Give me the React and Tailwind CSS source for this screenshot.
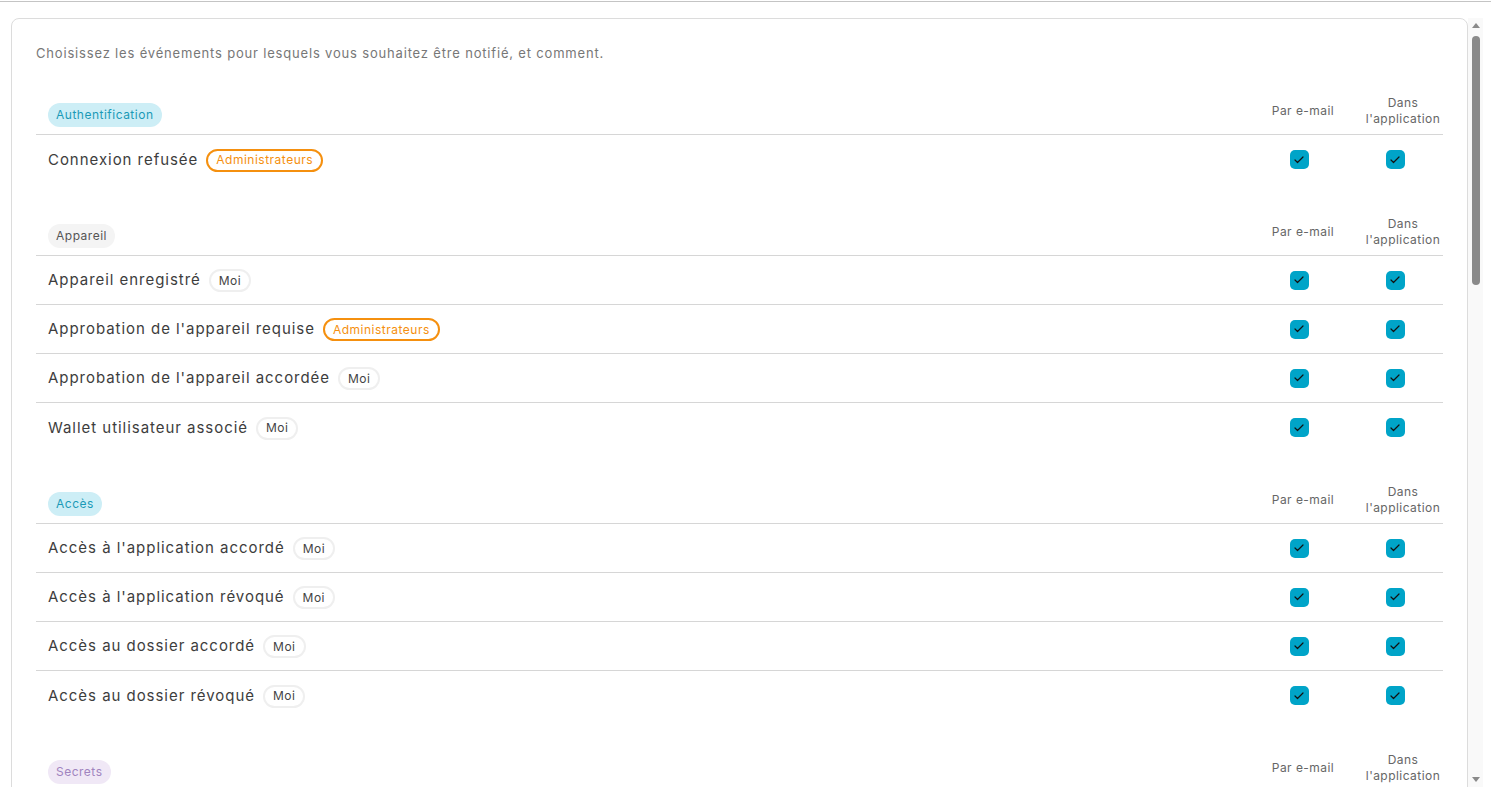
import { Check } from 'lucide-react'

const SECTIONS = [
  {
    label: 'Authentification',
    tone: 'cyan',
    events: [{ name: 'Connexion refusée', audience: 'admin' }],
  },
  {
    label: 'Appareil',
    tone: 'gray',
    events: [
      { name: 'Appareil enregistré', audience: 'me' },
      { name: "Approbation de l'appareil requise", audience: 'admin' },
      { name: "Approbation de l'appareil accordée", audience: 'me' },
      { name: 'Wallet utilisateur associé', audience: 'me' },
    ],
  },
  {
    label: 'Accès',
    tone: 'cyan',
    events: [
      { name: "Accès à l'application accordé", audience: 'me' },
      { name: "Accès à l'application révoqué", audience: 'me' },
      { name: 'Accès au dossier accordé', audience: 'me' },
      { name: 'Accès au dossier révoqué', audience: 'me' },
    ],
  },
  {
    label: 'Secrets',
    tone: 'purple',
    events: [
      { name: 'Secret partagé', audience: 'me' },
      { name: 'Secret modifié', audience: 'me' },
    ],
  },
]

const TONES = {
  cyan: 'bg-[#cdeef6] text-[#1b9ab7]',
  gray: 'bg-[#f4f4f4] text-[#555]',
  purple: 'bg-[#f0e8f6] text-[#a084bf]',
}

function CategoryChip({ label, tone }) {
  return (
    <span className={`inline-flex h-6 items-center rounded-full px-2 text-xs tracking-[0.5px] ${TONES[tone]}`}>
      {label}
    </span>
  )
}

function AudienceTag({ audience }) {
  if (audience === 'admin') {
    return (
      <span className="inline-flex h-[23px] items-center rounded-full border-2 border-[#f5900f] px-2 text-xs tracking-[0.5px] text-[#f5900f]">
        Administrateurs
      </span>
    )
  }
  return (
    <span className="inline-flex h-[23px] items-center rounded-full border-2 border-[#efefef] px-2 text-xs tracking-[0.5px] text-[#444]">
      Moi
    </span>
  )
}

function Checkbox() {
  return (
    <span className="grid h-[19px] w-[19px] place-items-center rounded-[5px] bg-[#00a4c8] text-[#111]">
      <Check size={12} strokeWidth={2.4} />
    </span>
  )
}

function Section({ section, first }) {
  return (
    <div className={first ? 'mt-[25px]' : 'mt-6'}>
      <div className="grid h-12 grid-cols-[1fr_96px_92px] items-center border-b border-[#d6d6d6] py-2 text-xs leading-4 tracking-[0.45px] text-[#666]">
        <div className="self-end pl-3">
          <CategoryChip label={section.label} tone={section.tone} />
        </div>
        <div className="text-center">Par e-mail</div>
        <div className="pl-3 text-center">
          Dans
          <br />
          l'application
        </div>
      </div>
      <div className="divide-y divide-[#d6d6d6]">
        {section.events.map((ev) => (
          <div key={ev.name} className="grid h-[49px] grid-cols-[1fr_96px_92px] items-center">
            <div className="flex items-center gap-2 pl-3 pt-px text-[15px] tracking-[0.96px] text-[#3d3d3d]">
              <span>{ev.name}</span>
              <AudienceTag audience={ev.audience} />
            </div>
            <div className="flex justify-center pr-2">
              <Checkbox />
            </div>
            <div className="flex justify-center pr-1">
              <Checkbox />
            </div>
          </div>
        ))}
      </div>
    </div>
  )
}

// classic scrollbar drawn next to the scrolling panel
function ScrollRail() {
  return (
    <div className="flex w-[15px] shrink-0 flex-col items-center bg-[#f9f9f9]">
      <div className="flex h-[15px] items-center justify-center">
        <span className="h-0 w-0 border-x-[4px] border-b-[5px] border-x-transparent border-b-[#8a8a8a]" />
      </div>
      <div className="mt-[3px] h-[249px] w-[8px] rounded-full bg-[#8a8a8a]" />
      <div className="flex-1" />
      <div className="flex h-[15px] items-center justify-center">
        <span className="h-0 w-0 border-x-[4px] border-t-[5px] border-x-transparent border-t-[#8a8a8a]" />
      </div>
    </div>
  )
}

export default function App() {
  return (
    <div className="flex h-screen flex-col bg-white font-[Inter,sans-serif]">
      <div className="mt-px h-px shrink-0 bg-[#c4c4c4]" />
      <div className="flex min-h-0 flex-1 pb-4 pl-[11px] pr-2 pt-4">
        <div className="h-full min-w-0 flex-1 overflow-y-scroll [scrollbar-width:none]">
          <div className="rounded-lg border border-[#dcdcdc] px-6 pb-6 pt-6">
            <p className="pt-px text-[13px] leading-[18px] tracking-[0.82px] text-[#777]">
              Choisissez les événements pour lesquels vous souhaitez être notifié, et comment.
            </p>
            {SECTIONS.map((s, i) => (
              <Section key={s.label} section={s} first={i === 0} />
            ))}
          </div>
        </div>
        <ScrollRail />
      </div>
    </div>
  )
}
